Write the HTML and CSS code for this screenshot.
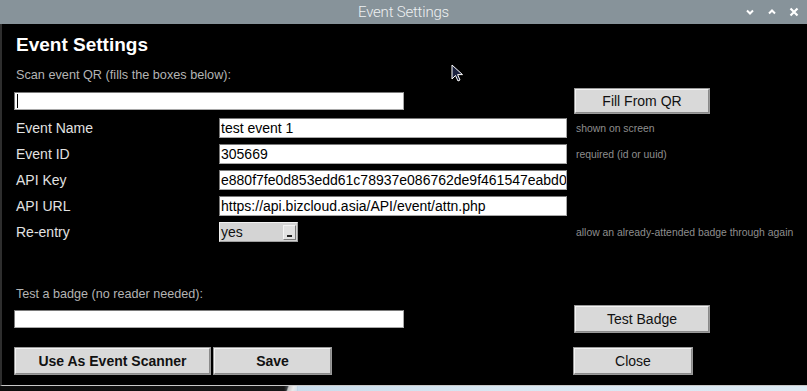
FILE: index.html
```html
<!DOCTYPE html>
<html lang="en">
<head>
<meta charset="utf-8">
<title>Event Settings</title>
<link rel="stylesheet" href="styles.css">
</head>
<body>
<div class="titlebar">
  <span class="title">Event Settings</span>
  <div class="controls">
    <svg class="ctl" width="10" height="8" viewBox="0 0 10 8"><path d="M2 2.5 L5 5.5 L8 2.5" fill="none" stroke="#fff" stroke-width="2"/></svg>
    <svg class="ctl" width="10" height="8" viewBox="0 0 10 8"><path d="M2 5.5 L5 2.5 L8 5.5" fill="none" stroke="#fff" stroke-width="2"/></svg>
    <svg class="ctl" width="10" height="10" viewBox="0 0 10 10"><path d="M1.5 1.5 L8.5 8.5 M8.5 1.5 L1.5 8.5" fill="none" stroke="#fff" stroke-width="2.2"/></svg>
  </div>
</div>
<main class="window">
  <h1 class="heading">Event Settings</h1>
  <p class="caption">Scan event QR (fills the boxes below):</p>
  <div class="action-row">
    <div class="entry wide"><span class="caret"></span></div>
    <button class="btn action">Fill From QR</button>
  </div>
  <div class="form">
    <label class="label">Event Name</label>
    <input class="entry field" value="test event 1" readonly>
    <span class="hint">shown on screen</span>

    <label class="label">Event ID</label>
    <input class="entry field" value="305669" readonly>
    <span class="hint">required (id or uuid)</span>

    <label class="label">API Key</label>
    <input class="entry field" value="e880f7fe0d853edd61c78937e086762de9f461547eabd0c1" readonly>
    <span class="hint"></span>

    <label class="label">API URL</label>
    <input class="entry field" value="https://api.bizcloud.asia/API/event/attn.php" readonly>
    <span class="hint"></span>

    <label class="label">Re-entry</label>
    <div class="select"><span class="select-value">yes</span><span class="select-arrow"><span class="arrow-mark"></span></span></div>
    <span class="hint">allow an already-attended badge through again</span>
  </div>
  <p class="caption test-caption">Test a badge (no reader needed):</p>
  <div class="action-row test-row">
    <div class="entry wide"></div>
    <button class="btn action tall">Test Badge</button>
  </div>
  <div class="footer">
    <button class="btn bold scanner">Use As Event Scanner</button>
    <button class="btn bold save">Save</button>
    <button class="btn close">Close</button>
  </div>
  <svg class="pointer" width="13" height="19" viewBox="0 0 13 19"><path d="M1 1 L1 15 L4.5 11.5 L7 17 L9 16 L6.6 10.6 L11.5 10.6 Z" fill="#1c2340" stroke="#fff" stroke-width="1"/></svg>
</main>
<div class="desktop"><span class="slash"></span></div>
</body>
</html>
```
FILE: styles.css
```css
* { box-sizing: border-box; }
html, body { margin: 0; padding: 0; }
body {
  width: 807px;
  height: 391px;
  overflow: hidden;
  background: #000;
  font-family: "Liberation Sans", Arial, sans-serif;
  display: flex;
  flex-direction: column;
}
.titlebar {
  height: 24px;
  flex: none;
  background: #87939a;
  display: flex;
  align-items: center;
  justify-content: center;
  position: relative;
}
.title {
  font-family: Roboto, "Liberation Sans", sans-serif;
  font-weight: 300;
  font-size: 15px;
  color: #eef1f2;
  letter-spacing: -0.2px;
}
.controls {
  position: absolute;
  right: 8px;
  top: 7px;
  display: flex;
  gap: 12px;
  align-items: center;
}
.window {
  flex: 1;
  position: relative;
  border-left: 2px solid #2e2e2e;
  border-bottom: 1px solid #c8c8c8;
  padding-left: 12px;
  color: #e2e2e2;
}
.heading {
  margin: 10px 0 0 2px;
  font-size: 19px;
  line-height: 22px;
  font-weight: bold;
  color: #fff;
}
.caption {
  margin: 11px 0 0 2px;
  font-size: 12.7px;
  line-height: 16px;
  color: #b4b4b4;
}
.test-caption { margin-top: 44px; font-size: 12.6px; }
.action-row {
  margin-top: 5px;
  width: 696px;
  height: 26px;
  display: flex;
  align-items: center;
  justify-content: space-between;
}
.test-row { margin-top: 3px; height: 28px; }
.entry {
  background: #fff;
  border: 1px solid #a8a8a8;
  border-top-color: #7a7a7a;
  border-left-color: #7a7a7a;
  font-family: "Liberation Sans", Arial, sans-serif;
  font-size: 14px;
  color: #000;
  padding: 0 0 0 1px;
  margin: 0;
  outline: none;
}
.wide { width: 390px; height: 18px; display: flex; align-items: center; padding-left: 2px; }
.caret { width: 1px; height: 14px; background: #000; }
.btn {
  background: #d9d9d9;
  border: 1px solid #8a8a8a;
  border-top-color: #f4f4f4;
  border-left-color: #f4f4f4;
  box-shadow: 0 0 0 1px #9a9a9a;
  font-family: "Liberation Sans", Arial, sans-serif;
  font-size: 14px;
  color: #111;
  padding: 0;
  margin: 0;
}
.action { width: 134px; height: 24px; margin-right: 1px; }
.tall { height: 26px; }
.bold { font-weight: bold; }
.form {
  margin-top: 4px;
  display: grid;
  grid-template-columns: 205px 348px auto;
  grid-auto-rows: 20px;
  row-gap: 6px;
  align-items: center;
}
.label {
  padding-left: 2px;
  font-size: 14px;
  color: #e2e2e2;
}
.field { width: 348px; height: 20px; }
.hint {
  padding-left: 9px;
  font-size: 10.4px;
  color: #8e8e8e;
  white-space: nowrap;
}
.select {
  width: 79px;
  height: 20px;
  background: #d4d4d4;
  border: 1px solid #a0a0a0;
  border-top-color: #f0f0f0;
  border-left-color: #f0f0f0;
  display: flex;
  align-items: center;
  justify-content: space-between;
  font-size: 14px;
  color: #111;
  padding: 0 1px 0 1px;
}
.select-arrow {
  width: 13px;
  height: 15px;
  background: #e2e2e2;
  border: 1px solid #7c7c7c;
  border-top-color: #f4f4f4;
  border-left-color: #f4f4f4;
  display: flex;
  align-items: flex-end;
  justify-content: center;
  padding-bottom: 2px;
}
.arrow-mark {
  width: 5px;
  height: 2px;
  background: #222;
}
.footer {
  margin-top: 14px;
  display: flex;
  align-items: center;
  height: 27px;
}
.footer .btn { height: 26px; margin: 0 1px; }
.scanner { width: 195px; }
.save { width: 117px; margin-left: 3px !important; }
.close { width: 118px; margin-left: 242px !important; }
.pointer {
  position: absolute;
  left: 449px;
  top: 40px;
}
.desktop {
  height: 5px;
  flex: none;
  background: linear-gradient(to right, #0d0d0d 0, #161616 284px, #c9dceb 298px, #d8e7f2 500px, #dce9f3 807px);
  position: relative;
}
.slash {
  position: absolute;
  left: 283px;
  top: 0;
  width: 14px;
  height: 5px;
  background: linear-gradient(110deg, transparent 30%, #c8c8c8 40%, #eaeaea 70%, #cfe0ec 100%);
}
```
